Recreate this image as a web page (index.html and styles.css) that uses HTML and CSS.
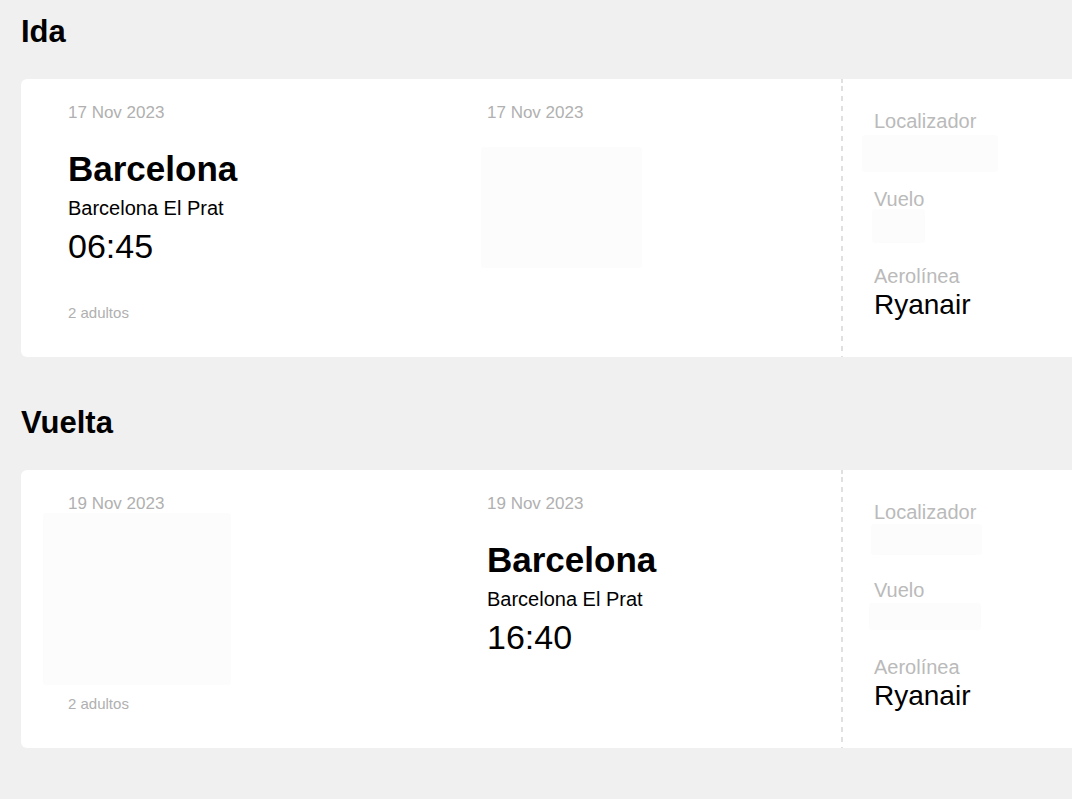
FILE: index.html
```html
<!DOCTYPE html>
<html lang="es">
<head>
<meta charset="utf-8">
<title>Vuelos</title>
<link rel="stylesheet" href="styles.css">
</head>
<body>
<div class="page">
  <section class="leg">
    <h2 class="leg-title">Ida</h2>
    <div class="ticket">
      <div class="route">
        <div class="stop">
          <div class="date">17 Nov 2023</div>
          <div class="place">
            <div class="city">Barcelona</div>
            <div class="airport">Barcelona El Prat</div>
            <div class="time">06:45</div>
          </div>
          <div class="pax">2 adultos</div>
        </div>
        <div class="stop">
          <div class="date">17 Nov 2023</div>
          <div class="skeleton sk-dest-1"></div>
        </div>
      </div>
      <div class="divider"></div>
      <div class="details">
        <div class="detail">
          <div class="label">Localizador</div>
          <div class="value"><div class="skeleton sk-loc-1"></div></div>
        </div>
        <div class="detail">
          <div class="label">Vuelo</div>
          <div class="value"><div class="skeleton sk-flight-1"></div></div>
        </div>
        <div class="detail">
          <div class="label">Aerolínea</div>
          <div class="value airline">Ryanair</div>
        </div>
      </div>
    </div>
  </section>

  <section class="leg">
    <h2 class="leg-title">Vuelta</h2>
    <div class="ticket">
      <div class="route">
        <div class="stop">
          <div class="date">19 Nov 2023</div>
          <div class="skeleton sk-orig-2"></div>
          <div class="pax">2 adultos</div>
        </div>
        <div class="stop">
          <div class="date">19 Nov 2023</div>
          <div class="place">
            <div class="city">Barcelona</div>
            <div class="airport">Barcelona El Prat</div>
            <div class="time">16:40</div>
          </div>
        </div>
      </div>
      <div class="divider"></div>
      <div class="details">
        <div class="detail">
          <div class="label">Localizador</div>
          <div class="value"><div class="skeleton sk-loc-2"></div></div>
        </div>
        <div class="detail">
          <div class="label">Vuelo</div>
          <div class="value"><div class="skeleton sk-flight-2"></div></div>
        </div>
        <div class="detail">
          <div class="label">Aerolínea</div>
          <div class="value airline">Ryanair</div>
        </div>
      </div>
    </div>
  </section>
</div>
</body>
</html>
```

FILE: styles.css
```css
html, body {
  margin: 0;
  padding: 0;
  overflow: hidden;
}

body {
  background: #f0f0f0;
  font-family: "Liberation Sans", Arial, sans-serif;
  color: #000;
}

.page {
  display: flex;
  flex-direction: column;
  gap: 48px;
  padding: 14px 0 0 21px;
}

.leg-title {
  margin: 0 0 30px;
  font-size: 31px;
  line-height: 35px;
  font-weight: bold;
}

.ticket {
  display: flex;
  width: 1120px;
  background: #fff;
  border-radius: 6px;
  padding: 24px 0 35px;
}

.route {
  display: grid;
  grid-template-columns: 419px 1fr;
  width: 773px;
  padding-left: 47px;
}

.stop {
  display: flex;
  flex-direction: column;
  align-items: flex-start;
}

.date {
  font-size: 17px;
  line-height: 20px;
  color: #b0b0b0;
}

.place {
  margin-top: 26px;
}

.city {
  font-size: 35px;
  line-height: 40px;
  font-weight: bold;
}

.airport {
  margin-top: 8px;
  font-size: 20px;
  line-height: 22px;
}

.time {
  margin-top: 8px;
  font-size: 34px;
  line-height: 38px;
}

.pax {
  margin-top: auto;
  padding-top: 10px;
  font-size: 15px;
  line-height: 18px;
  color: #b0b0b0;
}

.skeleton {
  background: #fcfcfc;
  border-radius: 3px;
}

.sk-dest-1 {
  margin: 24px 0 0 -6px;
  width: 161px;
  height: 121px;
}

.sk-orig-2 {
  margin: -1px 0 0 -25px;
  width: 188px;
  height: 172px;
}

.divider {
  flex: 0 0 2px;
  margin: -24px 0 -35px;
  background-image: repeating-linear-gradient(to bottom, #e0e0e0 0 5px, transparent 5px 10px);
  background-position: 0 7px;
}

.details {
  display: flex;
  flex-direction: column;
  gap: 21.5px;
  padding: 7px 0 1px 31px;
}

.label {
  font-size: 20px;
  line-height: 23px;
  color: #bababa;
}

.value {
  display: flex;
  align-items: flex-start;
  height: 33px;
}

.airline {
  font-size: 28px;
  line-height: 33px;
}

.sk-loc-1 {
  margin: 2px 0 0 -12px;
  width: 136px;
  height: 37px;
}

.sk-flight-1 {
  margin: -2px 0 0 -2px;
  width: 53px;
  height: 34px;
}

.sk-loc-2 {
  margin: 0 0 0 -3px;
  width: 111px;
  height: 31px;
}

.sk-flight-2 {
  margin: 1px 0 0 -5px;
  width: 112px;
  height: 27px;
}
```
